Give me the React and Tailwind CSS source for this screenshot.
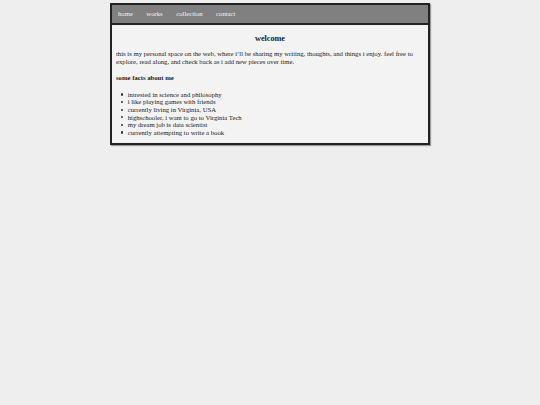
import React from "react";

const links = ["home", "works", "collection", "contact"];

const facts = [
  "intrested in science and philosophy",
  "i like playing games with friends",
  "currently living in Virginia, USA",
  "highschooler, i want to go to Virginia Tech",
  "my dream job is data scientist",
  "currently attempting to write a book",
];

export default function App() {
  return (
    <div
      className="min-h-[405px] bg-[#eeeeee] pt-[3px] text-[#1a1a1a]"
      style={{ fontFamily: '"Liberation Serif", "Times New Roman", serif' }}
    >
      <div className="mx-auto w-[320px] border-2 border-[#222] bg-[#f3f3f3] shadow-[1px_1px_1px_rgba(0,0,0,0.35)]">
        {/* nav */}
        <nav className="flex h-[20px] items-center gap-[13.5px] border-b-2 border-[#222] bg-[#808080] px-[6px] text-[6.7px] text-[#f4f4f4]">
          {links.map((l) => (
            <a key={l} href="#" className="leading-none">
              {l}
            </a>
          ))}
        </nav>

        {/* main */}
        <main className="px-[4px] pb-[7px] pt-[9px] text-[6.7px] leading-[7.6px]">
          <h1 className="text-center text-[8.2px] font-bold leading-[10px]">welcome</h1>
          <p className="mt-[6px]">
            this is my personal space on the web, where i’ll be sharing my writing, thoughts, and
            things i enjoy. feel free to explore, read along, and check back as i add new pieces
            over time.
          </p>
          <h3 className="mt-[9px] font-bold">some facts about me</h3>
          <ul className="mt-[9px] pl-[4px]">
            {facts.map((f) => (
              <li key={f} className="flex items-center">
                <span className="ml-[0.5px] mr-[5px] h-[2.2px] w-[2.2px] shrink-0 rounded-full bg-[#333]" />
                <span>{f}</span>
              </li>
            ))}
          </ul>
        </main>
      </div>
    </div>
  );
}
